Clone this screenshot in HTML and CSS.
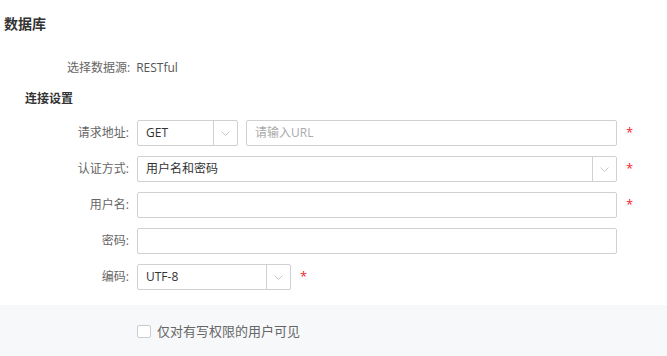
FILE: index.html
```html
<!DOCTYPE html>
<html lang="zh">
<head>
<meta charset="utf-8">
<link rel="stylesheet" href="styles.css">
</head>
<body>
<div class="page">
  <div class="title">数据库</div>
  <div class="source"><span class="source-label">选择数据源:</span><span class="source-value">RESTful</span></div>
  <div class="section">连接设置</div>
  <div class="form">
    <div class="row">
      <div class="label">请求地址:</div>
      <div class="field">
        <div class="select w-method"><span class="val">GET</span><span class="arrow"><svg width="9" height="5" viewBox="0 0 9 5"><path d="M0.5 0.5 L4.5 4.5 L8.5 0.5" fill="none" stroke="#c8c8c8" stroke-width="1"/></svg></span></div>
        <div class="input w-url"><span class="ph">请输入URL</span></div>
        <span class="star">*</span>
      </div>
    </div>
    <div class="row">
      <div class="label">认证方式:</div>
      <div class="field">
        <div class="select w-full"><span class="val">用户名和密码</span><span class="arrow"><svg width="9" height="5" viewBox="0 0 9 5"><path d="M0.5 0.5 L4.5 4.5 L8.5 0.5" fill="none" stroke="#c8c8c8" stroke-width="1"/></svg></span></div>
        <span class="star">*</span>
      </div>
    </div>
    <div class="row">
      <div class="label">用户名:</div>
      <div class="field">
        <div class="input w-full"></div>
        <span class="star">*</span>
      </div>
    </div>
    <div class="row">
      <div class="label">密码:</div>
      <div class="field">
        <div class="input w-full"></div>
      </div>
    </div>
    <div class="row">
      <div class="label">编码:</div>
      <div class="field">
        <div class="select w-enc"><span class="val">UTF-8</span><span class="arrow"><svg width="9" height="5" viewBox="0 0 9 5"><path d="M0.5 0.5 L4.5 4.5 L8.5 0.5" fill="none" stroke="#c8c8c8" stroke-width="1"/></svg></span></div>
        <span class="star">*</span>
      </div>
    </div>
  </div>
  <div class="footer">
    <label class="check"><span class="box"></span><span class="check-text">仅对有写权限的用户可见</span></label>
  </div>
</div>
</body>
</html>
```
FILE: styles.css
```css
html, body {
  margin: 0;
  padding: 0;
  background: #fff;
}
body {
  font-family: "Open Sans", "Noto Sans CJK SC", sans-serif;
  font-size: 12px;
  color: #333;
}
.page {
  width: 667px;
  height: 356px;
  overflow: hidden;
}
.title {
  font-size: 14px;
  font-weight: bold;
  line-height: 20px;
  padding: 14px 4px 0;
  color: #333;
}
.source {
  display: flex;
  align-items: center;
  line-height: 20px;
  margin-top: 24px;
  padding-left: 67px;
  color: #666;
}
.source-label {
  margin-right: 6px;
}
.source-value {
  color: #555;
}
.section {
  font-weight: bold;
  line-height: 20px;
  margin-top: 11px;
  padding-left: 25px;
  color: #333;
}
.form {
  display: flex;
  flex-direction: column;
  gap: 10px;
  margin-top: 11px;
}
.row {
  display: flex;
  align-items: center;
  height: 26px;
}
.label {
  width: 129px;
  text-align: right;
  color: #666;
  margin-right: 8px;
  line-height: 26px;
}
.field {
  display: flex;
  align-items: center;
  gap: 8px;
}
.input, .select {
  box-sizing: border-box;
  height: 26px;
  border: 1px solid #d0d0d0;
  border-radius: 2px;
  background: #fff;
  display: flex;
  align-items: center;
}
.val, .ph {
  padding-left: 8px;
  flex: 1;
  line-height: 24px;
  color: #333;
}
.ph {
  color: #aaa;
}
.arrow {
  width: 23px;
  height: 24px;
  border-left: 1px solid #d0d0d0;
  display: flex;
  align-items: center;
  justify-content: center;
}
.w-method { width: 101px; }
.w-url { width: 371px; }
.w-full { width: 480px; }
.w-enc { width: 154px; }
.star {
  color: #f5222d;
  font-size: 13px;
  margin-left: 1px;
  line-height: 26px;
  position: relative;
  top: -1px;
}
.footer {
  margin-top: 15px;
  height: 51px;
  background: #f7f8fa;
  box-sizing: border-box;
  padding: 16px 0 0 137px;
}
.check {
  display: flex;
  align-items: center;
  height: 20px;
}
.box {
  box-sizing: border-box;
  width: 14px;
  height: 13px;
  border: 1px solid #ccc;
  border-radius: 2px;
  background: #fff;
  margin-right: 6px;
}
.check-text {
  color: #666;
  font-size: 13px;
  line-height: 20px;
}
```
